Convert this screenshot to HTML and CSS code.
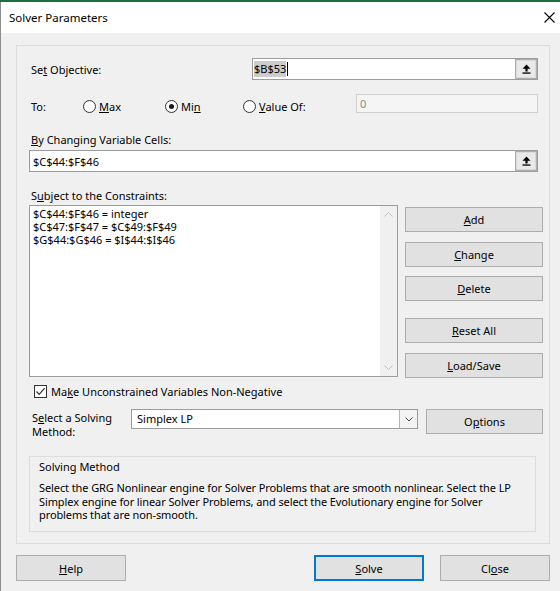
FILE: index.html
```html
<!DOCTYPE html>
<html>
<head>
<meta charset="utf-8">
<title>Solver Parameters</title>
<link rel="stylesheet" href="styles.css">
</head>
<body>
<div class="strip"></div>
<div class="dialog">
  <div class="titlebar">
    <span class="title">Solver Parameters</span>
    <svg class="close" width="11" height="11" viewBox="0 0 11 11"><path d="M0.5 0.5L10.5 10.5M10.5 0.5L0.5 10.5" stroke="#000" stroke-width="1.1" fill="none"/></svg>
  </div>
  <div class="content">
    <div class="group">
      <div class="row-obj">
        <span class="lbl lbl-obj">Se<u>t</u> Objective:</span>
        <div class="textbox tb-obj">
          <span class="txt"><span class="sel">$B$53</span><span class="caret"></span></span>
          <span class="refbtn"><svg width="9" height="10" viewBox="0 0 9 10"><path d="M4.5 0.5L8.5 4.8H5.6V7.4H3.4V4.8H0.5Z" fill="#000"/><rect x="0.5" y="8.4" width="8" height="1.3" fill="#000"/></svg></span>
        </div>
      </div>
      <div class="row-to">
        <span class="lbl lbl-to">To:</span>
        <span class="radio r-max"><span class="circle"></span><span><u>M</u>ax</span></span>
        <span class="radio r-min"><span class="circle on"></span><span>Mi<u>n</u></span></span>
        <span class="radio r-val"><span class="circle"></span><span><u>V</u>alue Of:</span></span>
        <div class="textbox tb-val">0</div>
      </div>
      <div class="lbl lbl-block lbl-by"><u>B</u>y Changing Variable Cells:</div>
      <div class="textbox tb-by">
        <span class="txt">$C$44:$F$46</span>
        <span class="refbtn"><svg width="9" height="10" viewBox="0 0 9 10"><path d="M4.5 0.5L8.5 4.8H5.6V7.4H3.4V4.8H0.5Z" fill="#000"/><rect x="0.5" y="8.4" width="8" height="1.3" fill="#000"/></svg></span>
      </div>
      <div class="lbl lbl-block lbl-sub">S<u>u</u>bject to the Constraints:</div>
      <div class="constraints">
        <div class="listbox">
          <div class="items">
            <div class="item">$C$44:$F$46 = integer</div>
            <div class="item">$C$47:$F$47 = $C$49:$F$49</div>
            <div class="item">$G$44:$G$46 = $I$44:$I$46</div>
          </div>
          <div class="scrollbar">
            <span class="sb-arrow"><svg width="9" height="5" viewBox="0 0 9 5"><path d="M0.5 4.5L4.5 0.5L8.5 4.5" stroke="#c2c2c2" fill="none"/></svg></span>
            <span class="sb-arrow"><svg width="9" height="5" viewBox="0 0 9 5"><path d="M0.5 0.5L4.5 4.5L8.5 0.5" stroke="#c2c2c2" fill="none"/></svg></span>
          </div>
        </div>
        <div class="btncol">
          <button class="btn btn-add"><u>A</u>dd</button>
          <button class="btn btn-change"><u>C</u>hange</button>
          <button class="btn btn-delete"><u>D</u>elete</button>
          <button class="btn btn-reset"><u>R</u>eset All</button>
          <button class="btn btn-load"><u>L</u>oad/Save</button>
        </div>
      </div>
      <div class="checkrow">
        <span class="checkbox"><svg width="11" height="11" viewBox="0 0 11 11"><path d="M1.5 5.5L4.2 8.3L9.6 2.2" stroke="#333" stroke-width="1.2" fill="none"/></svg></span>
        <span>Ma<u>k</u>e Unconstrained Variables Non-Negative</span>
      </div>
      <div class="methodrow">
        <div class="lbl method-lbl">S<u>e</u>lect a Solving<br>Method:</div>
        <div class="select">
          <span class="seltext">Simplex LP</span>
          <span class="dropbtn"><svg width="8" height="5" viewBox="0 0 8 5"><path d="M0.5 0.5L4 4L7.5 0.5" stroke="#444" fill="none"/></svg></span>
        </div>
        <button class="btn btn-options">O<u>p</u>tions</button>
      </div>
      <div class="infobox">
        <div class="info-title">Solving Method</div>
        <div class="info-text">Select the GRG Nonlinear engine for Solver Problems that are smooth nonlinear. Select the LP<br>Simplex engine for linear Solver Problems, and select the Evolutionary engine for Solver<br>problems that are non-smooth.</div>
      </div>
    </div>
    <div class="bottom">
      <button class="btn btn-help"><u>H</u>elp</button>
      <button class="btn btn-solve"><u>S</u>olve</button>
      <button class="btn btn-close">Cl<u>o</u>se</button>
    </div>
  </div>
</div>
</body>
</html>
```

FILE: styles.css
```css
html, body {
  margin: 0;
  padding: 0;
}
body {
  width: 560px;
  height: 591px;
  overflow: hidden;
  background: #f0f0f0;
  font-family: "Noto Sans", "Open Sans", sans-serif;
  font-size: 11px;
  color: #000;
}
u {
  text-underline-offset: 1px;
}
.strip {
  height: 2px;
  background: #1e6e42;
}
.dialog {
  height: 589px;
  box-sizing: border-box;
  border-left: 1px solid #8e8e8e;
  background: #f0f0f0;
}
.titlebar {
  height: 31px;
  background: #fff;
  display: flex;
  align-items: center;
  padding-left: 8px;
  padding-right: 5px;
}
.title {
  font-size: 11.5px;
}
.close {
  margin-left: auto;
}
.content {
  padding: 12px 10px 0 15px;
}
.group {
  height: 499px;
  box-sizing: border-box;
  border: 1px solid #dcdcdc;
  padding: 0 5px 0 12px;
}
.lbl {
  box-sizing: border-box;
}
.row-obj {
  display: flex;
  align-items: center;
  margin-top: 12px;
  height: 22px;
}
.lbl-obj {
  width: 223px;
  padding-left: 2px;
}
.textbox {
  box-sizing: border-box;
  border: 1px solid #9c9c9c;
  background: #fff;
  display: flex;
  align-items: center;
  height: 22px;
}
.tb-obj {
  width: 286px;
}
.txt {
  display: flex;
  align-items: center;
}
.tb-obj .txt {
  padding-left: 1px;
}
.sel {
  background: #cccccc;
  line-height: 16px;
}
.caret {
  display: inline-block;
  width: 1px;
  height: 14px;
  background: #000;
  margin-left: 1px;
}
.refbtn {
  margin-left: auto;
  width: 22px;
  height: 20px;
  box-sizing: border-box;
  border: 1px solid #adadad;
  box-shadow: inset 0 0 0 1px #d9d9d9;
  background: #e9e9e9;
  display: flex;
  align-items: center;
  justify-content: center;
}
.row-to {
  display: flex;
  margin-top: 14px;
  height: 19px;
}
.lbl-to, .radio {
  align-self: flex-end;
  height: 13px;
  line-height: 13px;
  display: flex;
  align-items: center;
}
.lbl-to {
  width: 54px;
  padding-left: 2px;
}
.r-max { width: 82px; }
.r-min { width: 78px; }
.r-val { width: 113px; }
.circle {
  width: 13px;
  height: 13px;
  box-sizing: border-box;
  border: 1px solid #333;
  border-radius: 50%;
  background: #fff;
  margin-right: 3px;
  display: flex;
  align-items: center;
  justify-content: center;
  flex: none;
}
.circle.on::after {
  content: "";
  width: 5px;
  height: 5px;
  border-radius: 50%;
  background: #1a1a1a;
}
.tb-val {
  width: 182px;
  height: 19px;
  border-color: #cfcfcf;
  background: #f5f5f5;
  color: #8a8a8a;
  padding-left: 3px;
}
.lbl-block {
  line-height: 16px;
  padding-left: 2px;
}
.lbl-by {
  margin-top: 19px;
}
.tb-by {
  margin-top: 2px;
  width: 509px;
}
.tb-by .txt {
  padding-left: 3px;
}
.lbl-sub {
  margin-top: 16px;
}
.constraints {
  display: flex;
  margin-top: 1px;
}
.listbox {
  width: 369px;
  height: 172px;
  box-sizing: border-box;
  border: 1px solid #9c9c9c;
  background: #fff;
  display: flex;
}
.items {
  flex: 1;
  padding: 1px 0 0 3px;
}
.item {
  height: 13px;
  line-height: 13px;
}
.scrollbar {
  width: 17px;
  background: #f0f0f0;
  display: flex;
  flex-direction: column;
  justify-content: space-between;
}
.sb-arrow {
  height: 17px;
  display: flex;
  align-items: center;
  justify-content: center;
}
.btncol {
  margin-left: 7px;
  width: 138px;
  padding-top: 2px;
  display: flex;
  flex-direction: column;
}
.btn {
  font: inherit;
  color: #000;
  box-sizing: border-box;
  border: 1px solid #adadad;
  background: #e1e1e1;
  height: 25px;
  padding: 0;
  margin: 0;
  text-align: center;
}
.btncol .btn {
  width: 138px;
}
.btn-change { margin-top: 10px; }
.btn-delete { margin-top: 9px; }
.btn-reset { margin-top: 17px; }
.btn-load { margin-top: 10px; }
.checkrow {
  display: flex;
  align-items: center;
  margin-top: 7px;
  height: 13px;
  padding-left: 5px;
}
.checkbox {
  width: 13px;
  height: 13px;
  box-sizing: border-box;
  border: 1px solid #333;
  background: #fff;
  margin-right: 4px;
  display: flex;
  align-items: center;
  justify-content: center;
}
.methodrow {
  display: flex;
  align-items: flex-start;
  margin-top: 11px;
  height: 25px;
}
.method-lbl {
  width: 102px;
  padding-left: 3px;
  padding-top: 2px;
  line-height: 14px;
}
.select {
  width: 287px;
  height: 20px;
  box-sizing: border-box;
  border: 1px solid #9c9c9c;
  background: #fff;
  display: flex;
}
.seltext {
  flex: 1;
  padding-left: 5px;
  line-height: 18px;
}
.dropbtn {
  width: 17px;
  border-left: 1px solid #b5b5b5;
  background: #f3f3f3;
  display: flex;
  align-items: center;
  justify-content: center;
}
.btn-options {
  margin-left: 8px;
  width: 117px;
}
.infobox {
  margin-top: 22px;
  width: 507px;
  height: 76px;
  box-sizing: border-box;
  border: 1px solid #dcdcdc;
  padding: 3px 0 0 9px;
}
.info-title {
  line-height: 14px;
}
.info-text {
  margin-top: 7px;
  line-height: 13.5px;
  letter-spacing: -0.1px;
}
.bottom {
  display: flex;
  margin-top: 11px;
}
.bottom .btn {
  height: 26px;
  width: 110px;
}
.btn-solve {
  margin-left: auto;
  border: 2px solid #0078d7;
}
.btn-close {
  margin-left: 16px;
}
```
